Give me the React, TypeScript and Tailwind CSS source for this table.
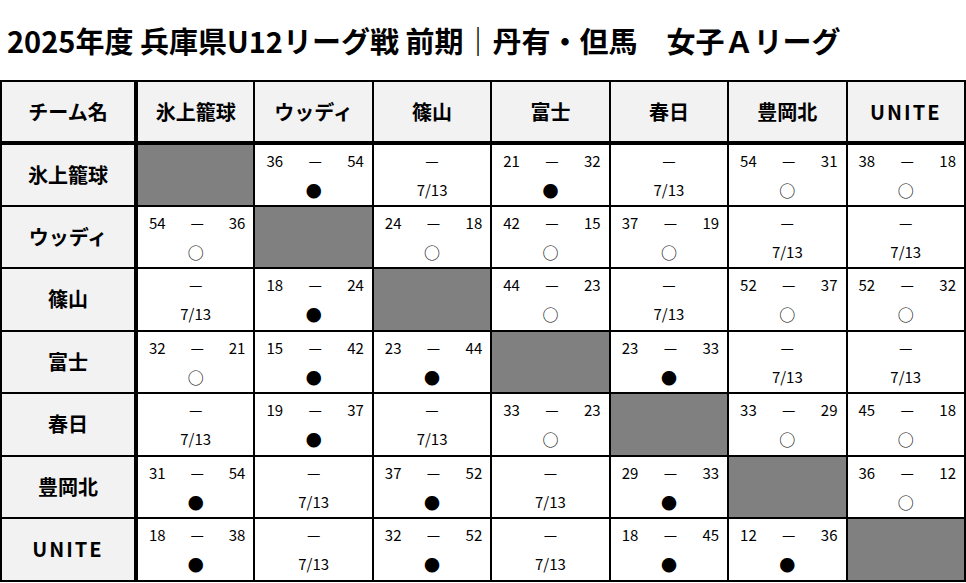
const teams = ["氷上籠球", "ウッディ", "篠山", "富士", "春日", "豊岡北", "UNITE"];

type Cell =
  | { kind: "self" }
  | { kind: "plan"; date: string }
  | { kind: "score"; us: number; them: number };

const S = (us: number, them: number): Cell => ({ kind: "score", us, them });
const P: Cell = { kind: "plan", date: "7/13" };
const X: Cell = { kind: "self" };

const results: Cell[][] = [
  [X, S(36, 54), P, S(21, 32), P, S(54, 31), S(38, 18)],
  [S(54, 36), X, S(24, 18), S(42, 15), S(37, 19), P, P],
  [P, S(18, 24), X, S(44, 23), P, S(52, 37), S(52, 32)],
  [S(32, 21), S(15, 42), S(23, 44), X, S(23, 33), P, P],
  [P, S(19, 37), P, S(33, 23), X, S(33, 29), S(45, 18)],
  [S(31, 54), P, S(37, 52), P, S(29, 33), X, S(36, 12)],
  [S(18, 38), P, S(32, 52), P, S(18, 45), S(12, 36), X],
];

const font = "font-['Noto_Sans_CJK_JP','Noto_Sans',sans-serif]";

function TeamLabel({ name }: { name: string }) {
  const latin = /^[A-Z]+$/.test(name);
  return <span className={latin ? "tracking-[2px]" : ""}>{name}</span>;
}

function ResultCell({ cell }: { cell: Cell }) {
  if (cell.kind === "self") {
    return <td className="border-2 border-black bg-[#808080]" />;
  }
  if (cell.kind === "plan") {
    return (
      <td className="border-2 border-black bg-white align-top">
        <div className="flex flex-col items-center pt-[6px] text-[15px] leading-[20px] text-black">
          <span>—</span>
          <span className="mt-[9px]">{cell.date}</span>
        </div>
      </td>
    );
  }
  const won = cell.us > cell.them;
  return (
    <td className="border-2 border-black bg-white align-top">
      <div className="flex flex-col pt-[6px] text-[15px] leading-[20px] text-black">
        <div className="grid grid-cols-3 pl-[11px] pr-[8px]">
          <span className="text-left">{cell.us}</span>
          <span className="text-center">—</span>
          <span className="text-right">{cell.them}</span>
        </div>
        <span className="mt-[9px] text-center text-[16px]">{won ? "○" : "●"}</span>
      </div>
    </td>
  );
}

export default function App() {
  return (
    <div className={`w-[966px] h-[583px] overflow-hidden bg-white text-black ${font}`}>
      <div className="flex h-[80px] items-center pl-[7px] text-[29px] font-bold leading-none">
        2025年度 兵庫県U12リーグ戦 前期｜丹有・但馬　女子Ａリーグ
      </div>
      <table className="w-[966px] table-fixed border-collapse">
        <colgroup>
          <col className="w-[135px]" />
          {teams.map((t) => (
            <col key={t} />
          ))}
        </colgroup>
        <thead>
          <tr className="h-[62px] bg-[#f2f2f2] text-[20px] font-bold">
            <th className="border-2 border-r-4 border-b-4 border-black border-r-double border-b-double">
              チーム名
            </th>
            {teams.map((t) => (
              <th
                key={t}
                className="border-2 border-b-4 border-black border-b-double"
              >
                <TeamLabel name={t} />
              </th>
            ))}
          </tr>
        </thead>
        <tbody>
          {results.map((row, i) => (
            <tr key={teams[i]} className="h-[62.5px]">
              <th className="border-2 border-r-4 border-black border-r-double bg-[#f2f2f2] text-[20px] font-bold">
                <TeamLabel name={teams[i]} />
              </th>
              {row.map((cell, j) => (
                <ResultCell key={j} cell={cell} />
              ))}
            </tr>
          ))}
        </tbody>
      </table>
    </div>
  );
}
